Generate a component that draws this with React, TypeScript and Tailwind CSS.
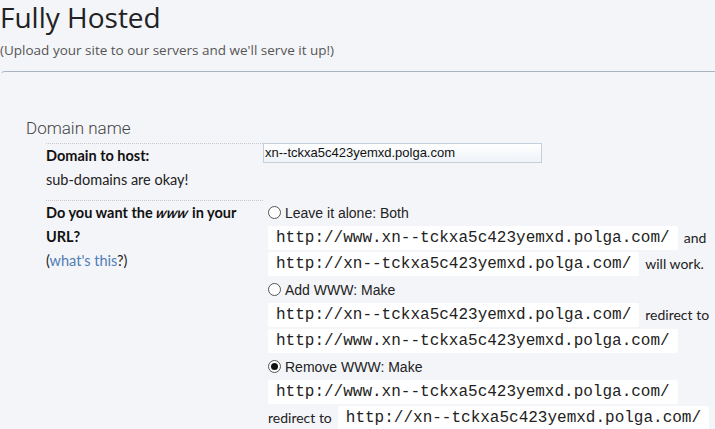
const MONO = "font-['Liberation_Mono','Courier_New',monospace]";

function Code({ children }: { children: string }) {
  return (
    <span className={`${MONO} inline-flex h-[24px] items-center rounded-[2px] bg-white px-2 text-[16px] text-[#222]`}>
      {children}
    </span>
  );
}

function Radio({ checked = false, label }: { checked?: boolean; label: string }) {
  return (
    <label className="flex h-[23px] items-center gap-[4px] font-['Liberation_Sans',Arial,sans-serif] text-[14px] text-[#222]">
      <span className="flex h-[13px] w-[13px] items-center justify-center rounded-full border border-[#555] bg-white">
        {checked && <span className="h-[7px] w-[7px] rounded-full bg-[#111]" />}
      </span>
      {label}
    </label>
  );
}

function Line({ children }: { children: React.ReactNode }) {
  return <div className="flex h-[24px] items-center gap-[6px] whitespace-nowrap">{children}</div>;
}

export default function App() {
  const www = "http://www.xn--tckxa5c423yemxd.polga.com/";
  const bare = "http://xn--tckxa5c423yemxd.polga.com/";

  return (
    <div className="min-h-screen overflow-hidden bg-[#f4f5f9] text-[#222]">
      <h1 className="font-['Open_Sans','Noto_Sans',sans-serif] text-[28px] leading-[34px] text-[#222]">Fully Hosted</h1>
      <p className="mt-[6px] font-['Open_Sans','Noto_Sans',sans-serif] text-[13.5px] leading-[20px] text-[#555]">
        (Upload your site to our servers and we'll serve it up!)
      </p>

      <div className="mt-[11px] rounded-tl-[5px] border-t border-l border-[#aab4c0] border-l-transparent pt-[46px]">
        <div className="pl-[25px] font-['Roboto',sans-serif] text-[17px] font-light leading-[20px] text-[#444]">Domain name</div>

        <div className="mt-[5px] grid grid-cols-[217px_1fr] pl-[45px] font-['Lato',sans-serif] text-[14.5px] leading-[24px]">
          {/* domain row */}
          <div className="border-t border-dotted border-[#c8c8c8] pb-[8px]">
            <div className="font-bold text-[#111]">Domain to host:</div>
            <div>sub-domains are okay!</div>
          </div>
          <div>
            <div className="h-[20px] w-[279px] border border-[#c5d0da] bg-gradient-to-b from-white to-[#eef3f8] pl-[1px] font-['Liberation_Sans',Arial,sans-serif] text-[13px] leading-[18px] text-[#111]">
              xn--tckxa5c423yemxd.polga.com
            </div>
          </div>

          {/* www row */}
          <div className="border-t border-dotted border-[#c8c8c8]">
            <div className="font-bold text-[#111]">
              Do you want the <em className="inline-block -skew-x-12 italic">www</em> in your
            </div>
            <div className="font-bold text-[#111]">URL?</div>
            <div>
              (<a className="text-[#4f7cb6]">what's this</a>?)
            </div>
          </div>
          <div className="flex flex-col gap-[2px] pl-[5px] pt-[1px] text-[14px]">
            <Radio label="Leave it alone: Both" />
            <Line>
              <Code>{www}</Code>
              <span>and</span>
            </Line>
            <Line>
              <Code>{bare}</Code>
              <span>will work.</span>
            </Line>
            <Radio label="Add WWW: Make" />
            <Line>
              <Code>{bare}</Code>
              <span>redirect to</span>
            </Line>
            <Line>
              <Code>{www}</Code>
            </Line>
            <Radio checked label="Remove WWW: Make" />
            <Line>
              <Code>{www}</Code>
            </Line>
            <Line>
              <span>redirect to</span>
              <Code>{bare}</Code>
            </Line>
          </div>
        </div>
      </div>
    </div>
  );
}
